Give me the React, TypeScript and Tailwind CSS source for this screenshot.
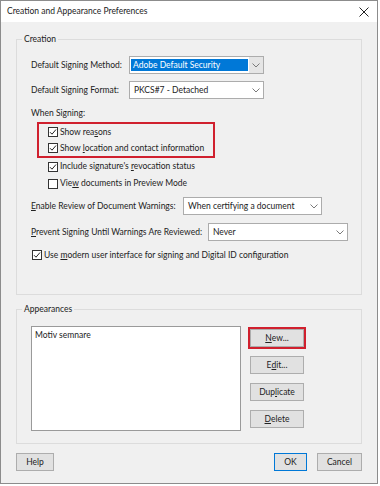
import React from "react"

const font = { fontFamily: 'Lato, "Noto Sans", sans-serif' }

function Chevron() {
  return (
    <svg width="8" height="5" viewBox="0 0 8 5" className="shrink-0">
      <path d="M0.5 0.5 L4 4 L7.5 0.5" fill="none" stroke="#7a7a7a" strokeWidth="1" />
    </svg>
  )
}

function Select({ value, width, focused = false }: { value: string; width: string; focused?: boolean }) {
  return (
    <div className={`flex h-[18px] ${width} shrink-0 items-stretch border border-[#acacac] bg-white`}>
      <div className="flex flex-1 items-center px-[1px]">
        {focused ? (
          <span className="flex h-[12px] w-full items-center bg-[#0078d7] pl-[2px] text-white">{value}</span>
        ) : (
          <span className="pl-[3px]">{value}</span>
        )}
      </div>
      <div className={`flex w-[14px] items-center justify-center ${focused ? "bg-[#e5e5e5]" : ""}`}>
        <Chevron />
      </div>
    </div>
  )
}

function Check({ checked }: { checked: boolean }) {
  return (
    <span className="mr-[2px] flex h-[10px] w-[10px] shrink-0 items-center justify-center border border-[#333] bg-white">
      {checked && (
        <svg width="8" height="8" viewBox="0 0 8 8">
          <path d="M1 4.2 L3 6.2 L7 1.5" fill="none" stroke="#222" strokeWidth="1" />
        </svg>
      )}
    </span>
  )
}

function CheckRow({ checked, children, h = "h-[17px]" }: { checked: boolean; children: React.ReactNode; h?: string }) {
  return (
    <div className={`flex ${h} items-center`}>
      <Check checked={checked} />
      <span>{children}</span>
    </div>
  )
}

function Button({ children, width, primary = false }: { children: React.ReactNode; width: string; primary?: boolean }) {
  return (
    <div
      className={`flex h-[18px] ${width} items-center justify-center border ${
        primary ? "border-[#0078d7]" : "border-[#adadad]"
      } bg-[#e1e1e1]`}
    >
      {children}
    </div>
  )
}

export default function App() {
  return (
    <div className="h-[486px] w-[380px] whitespace-nowrap bg-white text-[8.5px] leading-none text-[#222]" style={font}>
      <div className="flex h-[484px] w-[378px] flex-col border border-[#8c8c8c]">
        {/* title bar */}
        <div className="flex h-[21px] shrink-0 items-center justify-between bg-white pl-[6px] pr-[8px]">
          <span>Creation and Appearance Preferences</span>
          <svg width="10" height="10" viewBox="0 0 10 10">
            <path d="M0.5 0.5 L9.5 9.5 M9.5 0.5 L0.5 9.5" stroke="#222" strokeWidth="1" />
          </svg>
        </div>

        <div className="flex flex-1 flex-col bg-[#f0f0f0] px-[15px]">
          {/* Creation */}
          <fieldset className="mt-[10px] h-[263px] border border-[#dcdcdc] pl-[14px]">
            <legend className="ml-[-9px] h-[14px] px-[2px] leading-[14px]">Creation</legend>

            <div className="mt-[10px] flex h-[18px] items-center">
              <span className="w-[98px]">Default Signing Method:</span>
              <Select value="Adobe Default Security" width="w-[135px]" focused />
            </div>
            <div className="mt-[7px] flex h-[18px] items-center">
              <span className="w-[98px]">Default Signing Format:</span>
              <Select value="PKCS#7 - Detached" width="w-[135px]" />
            </div>
            <div className="mt-[5px] flex h-[18px] items-center">When Signing:</div>

            <div className="ml-[6px] w-[178px] border-2 border-[#d0202e] pl-[9px]">
              <CheckRow checked h="h-[16px]">Show rea<u>s</u>ons</CheckRow>
              <CheckRow checked h="h-[16px]">Show <u>l</u>ocation and contact information</CheckRow>
            </div>
            <div className="pl-[17px]">
              <CheckRow checked>Include signature's <u>r</u>evocation status</CheckRow>
              <CheckRow checked={false}>Vie<u>w</u> documents in Preview Mode</CheckRow>
            </div>

            <div className="mt-[5px] flex h-[18px] items-center">
              <span className="w-[152px]"><u>E</u>nable Review of Document Warnings:</span>
              <Select value="When certifying a document" width="w-[139px]" />
            </div>
            <div className="mt-[8px] flex h-[18px] items-center">
              <span className="w-[177px]"><u>P</u>revent Signing Until Warnings Are Reviewed:</span>
              <Select value="Never" width="w-[140px]" />
            </div>
            <div className="mt-[5px] pl-[1px]">
              <CheckRow checked h="h-[18px]">Use <u>m</u>odern user interface for signing and Digital ID configuration</CheckRow>
            </div>
          </fieldset>

          {/* Appearances */}
          <fieldset className="mt-[7px] h-[142px] border border-[#dcdcdc] pl-[14px]">
            <legend className="ml-[-9px] h-[14px] px-[2px] leading-[14px]">Appearances</legend>
            <div className="mt-[10px] flex">
              <div className="h-[105px] w-[210px] border border-[#9a9a9a] bg-white px-[3px] pt-[4px]">Motiv semnare</div>
              <div className="ml-[7px] mt-[1px] flex flex-col">
                <div className="border-2 border-[#d0202e]">
                  <Button width="w-[54px]"><u>N</u>ew...</Button>
                </div>
                <div className="ml-[2px] mt-[7px] flex flex-col gap-[9px]">
                  <Button width="w-[54px]">E<u>d</u>it...</Button>
                  <Button width="w-[54px]">Dup<u>l</u>icate</Button>
                  <Button width="w-[54px]"><u>D</u>elete</Button>
                </div>
              </div>
            </div>
          </fieldset>

          {/* footer */}
          <div className="mt-[9px] flex items-center">
            <Button width="w-[38px]">Help</Button>
            <div className="ml-auto flex gap-[10px]">
              <Button width="w-[33px]" primary>OK</Button>
              <Button width="w-[45px]">Cancel</Button>
            </div>
          </div>
        </div>
      </div>
    </div>
  )
}
